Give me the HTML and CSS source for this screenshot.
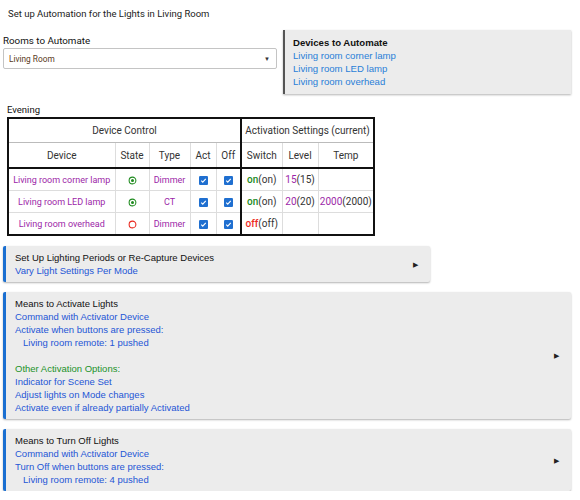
FILE: index.html
```html
<!DOCTYPE html>
<html lang="en">
<head>
  <meta charset="UTF-8" />
  <title>Room Lighting</title>
  <link rel="stylesheet" href="styles.css">
</head>
<body>
  <div class="page-title">Set up Automation for the Lights in Living Room</div>

  <div class="top-row">
    <div class="rooms">
      <label class="field-label">Rooms to Automate</label>
      <div class="select">
        <span>Living Room</span>
        <span class="caret">&#9660;</span>
      </div>
    </div>
    <div class="devices-box">
      <div class="devices-title">Devices to Automate</div>
      <div class="device-link">Living room corner lamp</div>
      <div class="device-link">Living room LED lamp</div>
      <div class="device-link">Living room overhead</div>
    </div>
  </div>

  <div class="period-label">Evening</div>
  <table class="grid">
    <colgroup>
      <col style="width:107px"><col style="width:34px"><col style="width:41px"><col style="width:26px">
      <col style="width:25px"><col style="width:41px"><col style="width:36px"><col style="width:56px">
    </colgroup>
    <tr class="head-1">
      <th colspan="5" class="group-end">Device Control</th>
      <th colspan="3">Activation Settings (current)</th>
    </tr>
    <tr class="head-2">
      <th>Device</th><th>State</th><th>Type</th><th>Act</th><th class="group-end">Off</th>
      <th>Switch</th><th>Level</th><th>Temp</th>
    </tr>
    <tr class="first-row">
      <td class="dev">Living room corner lamp</td>
      <td><svg class="radio" viewBox="0 0 12 12"><circle cx="6" cy="6" r="4.5" fill="none" stroke="#1e8a1e" stroke-width="1.4"/><circle cx="6" cy="6" r="2" fill="#1e8a1e"/></svg></td>
      <td class="dev">Dimmer</td>
      <td><svg class="check" viewBox="0 0 12 12"><rect width="12" height="12" rx="1.5" fill="#1f6fd0"/><path d="M3 6.2l2 2 4-4.4" fill="none" stroke="#fff" stroke-width="1.5"/></svg></td>
      <td class="group-end"><svg class="check" viewBox="0 0 12 12"><rect width="12" height="12" rx="1.5" fill="#1f6fd0"/><path d="M3 6.2l2 2 4-4.4" fill="none" stroke="#fff" stroke-width="1.5"/></svg></td>
      <td><span class="on">on</span>(on)</td>
      <td><span class="num">15</span>(15)</td>
      <td></td>
    </tr>
    <tr>
      <td class="dev">Living room LED lamp</td>
      <td><svg class="radio" viewBox="0 0 12 12"><circle cx="6" cy="6" r="4.5" fill="none" stroke="#1e8a1e" stroke-width="1.4"/><circle cx="6" cy="6" r="2" fill="#1e8a1e"/></svg></td>
      <td class="dev">CT</td>
      <td><svg class="check" viewBox="0 0 12 12"><rect width="12" height="12" rx="1.5" fill="#1f6fd0"/><path d="M3 6.2l2 2 4-4.4" fill="none" stroke="#fff" stroke-width="1.5"/></svg></td>
      <td class="group-end"><svg class="check" viewBox="0 0 12 12"><rect width="12" height="12" rx="1.5" fill="#1f6fd0"/><path d="M3 6.2l2 2 4-4.4" fill="none" stroke="#fff" stroke-width="1.5"/></svg></td>
      <td><span class="on">on</span>(on)</td>
      <td><span class="num">20</span>(20)</td>
      <td><span class="num">2000</span>(2000)</td>
    </tr>
    <tr>
      <td class="dev">Living room overhead</td>
      <td><svg class="radio" viewBox="0 0 12 12"><circle cx="6" cy="6" r="4.5" fill="none" stroke="#e8261c" stroke-width="1.4"/></svg></td>
      <td class="dev">Dimmer</td>
      <td><svg class="check" viewBox="0 0 12 12"><rect width="12" height="12" rx="1.5" fill="#1f6fd0"/><path d="M3 6.2l2 2 4-4.4" fill="none" stroke="#fff" stroke-width="1.5"/></svg></td>
      <td class="group-end"><svg class="check" viewBox="0 0 12 12"><rect width="12" height="12" rx="1.5" fill="#1f6fd0"/><path d="M3 6.2l2 2 4-4.4" fill="none" stroke="#fff" stroke-width="1.5"/></svg></td>
      <td><span class="off">off</span>(off)</td>
      <td></td>
      <td></td>
    </tr>
  </table>

  <div class="section narrow">
    <div class="section-body">
      <div class="section-title">Set Up Lighting Periods or Re-Capture Devices</div>
      <div class="link">Vary Light Settings Per Mode</div>
    </div>
    <span class="arrow">&#9654;</span>
  </div>

  <div class="section">
    <div class="section-body">
      <div class="section-title">Means to Activate Lights</div>
      <div class="link">Command with Activator Device</div>
      <div class="link">Activate when buttons are pressed:</div>
      <div class="link indent">Living room remote: 1 pushed</div>
      <div class="blank"></div>
      <div class="green">Other Activation Options:</div>
      <div class="link">Indicator for Scene Set</div>
      <div class="link">Adjust lights on Mode changes</div>
      <div class="link">Activate even if already partially Activated</div>
    </div>
    <span class="arrow">&#9654;</span>
  </div>

  <div class="section">
    <div class="section-body">
      <div class="section-title">Means to Turn Off Lights</div>
      <div class="link">Command with Activator Device</div>
      <div class="link">Turn Off when buttons are pressed:</div>
      <div class="link indent">Living room remote: 4 pushed</div>
    </div>
    <span class="arrow">&#9654;</span>
  </div>
</body>
</html>
```

FILE: styles.css
```css
body {
  margin: 0;
  padding: 7px 9px 0 3px;
  background: #fff;
  color: #222;
  font-family: Roboto, 'Liberation Sans', sans-serif;
  font-size: 10px;
}

.page-title {
  padding-left: 5px;
  font-size: 9.5px;
  line-height: 14px;
  color: #222;
}

.top-row {
  display: flex;
  gap: 6px;
  margin-top: 9px;
}

.rooms {
  width: 274px;
  padding-top: 3px;
}

.field-label {
  display: block;
  font-size: 9.8px;
  line-height: 15px;
  color: #111;
}

.select {
  display: flex;
  justify-content: space-between;
  align-items: center;
  height: 19px;
  padding: 0 6px 0 5px;
  border: 1px solid #c4c4c4;
  border-radius: 2px;
  font-size: 8.3px;
  color: #5a3a20;
}

.select .caret {
  font-size: 6px;
  color: #333;
}

.devices-box {
  flex: 1;
  padding: 6px 10px 6px 8px;
  background: #ececec;
  border-left: 2px solid #555;
  box-shadow: 0 1px 2px rgba(0, 0, 0, 0.3);
  font-family: 'Liberation Sans', Arial, sans-serif;
  font-size: 9.6px;
  line-height: 13px;
}

.devices-title {
  font-weight: bold;
  color: #111;
}

.device-link {
  color: #2a7fd8;
}

.period-label {
  margin: 9px 0 0 4px;
  font-size: 9.5px;
  line-height: 14px;
  color: #111;
}

.grid {
  margin-left: 4px;
  border-collapse: collapse;
  border: 2px solid #111;
  table-layout: fixed;
  width: 366px;
  font-size: 10px;
}

.grid th,
.grid td {
  border: 1px solid #ddd;
  text-align: center;
  padding: 0;
  white-space: nowrap;
}

.grid th {
  font-weight: normal;
  color: #333;
}

.head-1 th {
  height: 23px;
  border-bottom: 1px solid #bbb;
}

.head-2 th {
  height: 24px;
}

.grid td {
  height: 21px;
  color: #333;
}

.grid .group-end {
  border-right: 2px solid #111;
}

.first-row td {
  border-top: 2px solid #111;
}

.grid .dev {
  color: #9c27a8;
  font-size: 9px;
}

.radio,
.check {
  width: 9px;
  height: 9px;
  vertical-align: middle;
}

.on {
  color: #1b8a1b;
  font-weight: 500;
}

.off {
  color: #ee2a1e;
  font-weight: 500;
}

.num {
  color: #9c27a8;
}

.section {
  display: flex;
  align-items: center;
  margin-top: 10px;
  padding: 5px 12px 5px 9px;
  background: #ececec;
  border-left: 3px solid #1a6fd1;
  border-radius: 2px;
  box-shadow: 0 1px 2px rgba(0, 0, 0, 0.3);
  font-family: 'Liberation Sans', Arial, sans-serif;
  font-size: 9.5px;
  line-height: 13px;
}

.section.narrow {
  width: 403px;
}

.grid + .section {
  margin-top: 10px;
}

.section-body {
  flex: 1;
}

.section-title {
  color: #111;
}

.link {
  color: #2456d6;
}

.link.indent {
  padding-left: 8px;
}

.green {
  color: #22922a;
}

.blank {
  height: 13px;
}

.arrow {
  font-size: 7px;
  color: #222;
}
```
